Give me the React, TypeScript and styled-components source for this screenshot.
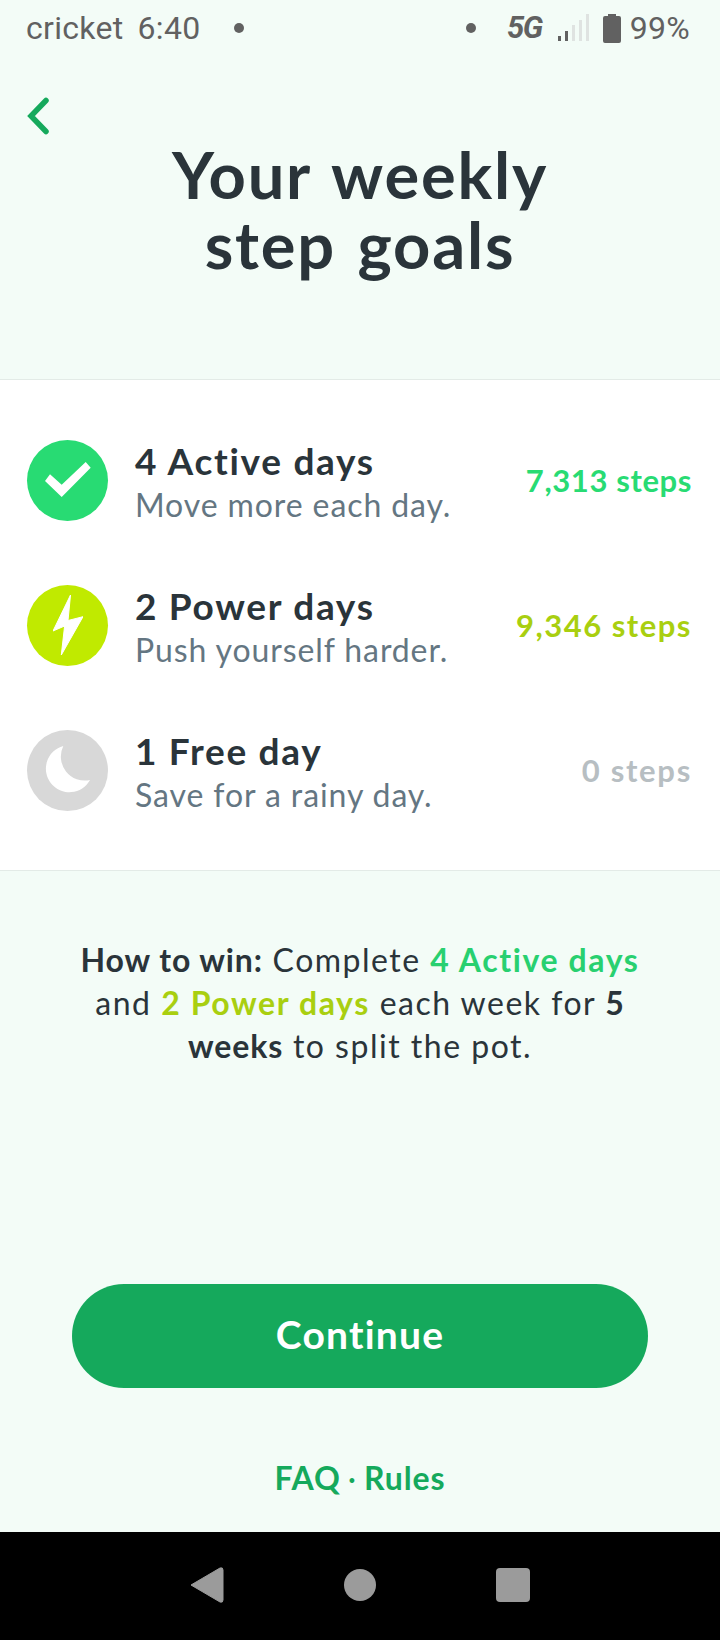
import React from "react";
import styled, { createGlobalStyle } from "styled-components";

const Global = createGlobalStyle`
  html, body { margin: 0; padding: 0; background: #f3fcf7; }
  * { box-sizing: border-box; }
`;

const Screen = styled.div`
  width: 720px;
  height: 1640px;
  display: flex;
  flex-direction: column;
  background: #f3fcf7;
  font-family: "Lato", "Liberation Sans", sans-serif;
  color: #2a343a;
  overflow: hidden;
`;

const StatusBar = styled.div`
  height: 56px;
  padding: 0 30px 1px 26px;
  display: flex;
  align-items: center;
  justify-content: space-between;
  font-family: "Roboto", sans-serif;
  font-size: 32px;
  color: #616161;
`;

const StatusGroup = styled.div`
  display: flex;
  align-items: center;
`;

const StatusText = styled.span<{ $ml?: number }>`
  margin-left: ${(p) => p.$ml ?? 0}px;
  line-height: 40px;
  letter-spacing: 0.3px;
`;

const Dot = styled.span<{ $ml?: number; $mr?: number }>`
  width: 10px;
  height: 10px;
  border-radius: 50%;
  background: #616161;
  margin-left: ${(p) => p.$ml ?? 0}px;
  margin-right: ${(p) => p.$mr ?? 0}px;
`;

const FiveG = styled.span`
  font-size: 31px;
  font-weight: 700;
  font-style: italic;
  letter-spacing: -1.5px;
  line-height: 40px;
`;

const Header = styled.header`
  height: 324px;
  flex: none;
  position: relative;
  border-bottom: 1px solid #e3ebe7;
`;

const BackButton = styled.div`
  position: absolute;
  left: 27px;
  top: 41px;
  width: 26px;
  height: 42px;
  display: flex;
`;

const Title = styled.h1`
  margin: 0;
  padding-top: 83px;
  text-align: center;
  font-size: 65px;
  line-height: 70px;
  font-weight: 700;
  letter-spacing: 1.8px;
  word-spacing: 4px;
  color: #2a343a;
`;

const Goals = styled.section`
  height: 491px;
  flex: none;
  background: #fff;
  border-bottom: 1px solid #e3ebe7;
  padding: 60px 28px 0 27px;
  display: flex;
  flex-direction: column;
  gap: 65px;
`;

const Goal = styled.div`
  display: flex;
  align-items: center;
  height: 80px;
`;

const Badge = styled.div<{ $bg: string }>`
  width: 81px;
  height: 81px;
  border-radius: 50%;
  flex: none;
  background: ${(p) => p.$bg};
  display: flex;
  align-items: center;
  justify-content: center;
`;

const GoalText = styled.div`
  margin-left: 27px;
  padding-top: 5px;
  flex: 1;
`;

const GoalTitle = styled.div`
  font-size: 37px;
  line-height: 44px;
  font-weight: 700;
  letter-spacing: 1.7px;
`;

const GoalSub = styled.div`
  font-size: 32px;
  line-height: 44px;
  color: #647682;
  letter-spacing: 0.9px;
`;

const Steps = styled.div<{ $color: string; $ls: number }>`
  font-size: 31px;
  font-weight: 700;
  color: ${(p) => p.$color};
  letter-spacing: ${(p) => p.$ls}px;
`;

const Main = styled.main`
  flex: 1;
  display: flex;
  flex-direction: column;
  align-items: center;
`;

const HowTo = styled.p`
  margin: 67px 0 0;
  width: 600px;
  text-align: center;
  font-size: 32px;
  line-height: 43px;
  letter-spacing: 1.5px;
`;

const Strong = styled.strong<{ $color?: string }>`
  font-weight: 700;
  letter-spacing: ${(p) => (p.$color ? 1.6 : 0.9)}px;
  color: ${(p) => p.$color ?? "inherit"};
`;

const Continue = styled.button`
  margin-top: 217px;
  width: 576px;
  height: 104px;
  padding: 0 0 4px;
  border: 0;
  border-radius: 52px;
  background: #15a95c;
  color: #fff;
  font-family: inherit;
  font-size: 39px;
  font-weight: 700;
  letter-spacing: 1.2px;
`;

const Links = styled.div`
  margin-top: 70px;
  font-size: 32px;
  line-height: 40px;
  font-weight: 700;
  letter-spacing: 0.9px;
  color: #15a95c;
`;

const Sep = styled.span`
  font-weight: 400;
  margin: 0 7px;
`;

const NavBar = styled.nav`
  height: 108px;
  flex: none;
  background: #000;
  display: flex;
  align-items: center;
  justify-content: center;
  padding-bottom: 2px;
`;

const NavItems = styled.div`
  display: flex;
  align-items: center;
  gap: 120px;
`;

const Circle = styled.div`
  width: 32px;
  height: 32px;
  border-radius: 50%;
  background: #9b9b9b;
`;

const Square = styled.div`
  width: 34px;
  height: 34px;
  border-radius: 4px;
  background: #9b9b9b;
`;

export default function App() {
  return (
    <Screen>
      <Global />
      <StatusBar>
        <StatusGroup>
          <StatusText>cricket</StatusText>
          <StatusText $ml={14}>6:40</StatusText>
          <Dot $ml={34} />
        </StatusGroup>
        <StatusGroup>
          <Dot $mr={31} />
          <FiveG>5G</FiveG>
          <svg width="32" height="30" viewBox="0 0 32 30" style={{ marginLeft: 16 }}>
            <rect x="0" y="23" width="3" height="5" fill="#616161" />
            <rect x="7" y="18" width="3" height="10" fill="#616161" />
            <rect x="14" y="12" width="3" height="16" fill="#dfe3e1" />
            <rect x="21" y="7" width="3" height="21" fill="#dfe3e1" />
            <rect x="28" y="1" width="3" height="27" fill="#dfe3e1" />
          </svg>
          <svg width="18" height="30" viewBox="0 0 18 30" style={{ marginLeft: 13 }}>
            <path d="M5 1h8v2h3a2 2 0 0 1 2 2v23a2 2 0 0 1-2 2H2a2 2 0 0 1-2-2V5a2 2 0 0 1 2-2h3z" fill="#616161" />
          </svg>
          <StatusText $ml={9}>99%</StatusText>
        </StatusGroup>
      </StatusBar>
      <Header>
        <BackButton>
          <svg width="26" height="42" viewBox="0 0 26 42" fill="none">
            <path d="M19 3.5 4 19l15 15.5" stroke="#15a95c" strokeWidth="5.5" strokeLinecap="round" strokeLinejoin="miter" />
          </svg>
        </BackButton>
        <Title>
          Your weekly
          <br />
          step goals
        </Title>
      </Header>
      <Goals>
        <Goal>
          <Badge $bg="#28db73">
            <svg width="46" height="36" viewBox="0 0 46 36">
              <path d="M0 19 16.7 35 45.7 5.7 40.7 0 16.7 22.7 5 12.3z" fill="#fff" />
            </svg>
          </Badge>
          <GoalText>
            <GoalTitle>4 Active days</GoalTitle>
            <GoalSub>Move more each day.</GoalSub>
          </GoalText>
          <Steps $color="#28db73" $ls={0.6}>7,313 steps</Steps>
        </Goal>
        <Goal>
          <Badge $bg="#c0ea00">
            <svg width="30" height="60" viewBox="0 0 30 60">
              <path d="M17.5 0 0 36 11.6 31 8.3 60 30 21.7 15 25.5z" fill="#fff" stroke="#fff" strokeLinejoin="round" />
            </svg>
          </Badge>
          <GoalText>
            <GoalTitle>2 Power days</GoalTitle>
            <GoalSub>Push yourself harder.</GoalSub>
          </GoalText>
          <Steps $color="#a9cf10" $ls={1.5}>9,346 steps</Steps>
        </Goal>
        <Goal>
          <Badge $bg="#d8d8d8">
            <svg width="46" height="48" viewBox="0 0 46 48">
              <path d="M18.3 0A23.5 23.5 0 1 0 45 34 A24 24 0 0 1 18.3 0z" fill="#fff" />
            </svg>
          </Badge>
          <GoalText>
            <GoalTitle>1 Free day</GoalTitle>
            <GoalSub>Save for a rainy day.</GoalSub>
          </GoalText>
          <Steps $color="#b7bec2" $ls={1.7}>0 steps</Steps>
        </Goal>
      </Goals>
      <Main>
        <HowTo>
          <Strong>How to win:</Strong> Complete <Strong $color="#28d070">4 Active days</Strong> and{" "}
          <Strong $color="#a9cf10">2 Power days</Strong> each week for <Strong>5 weeks</Strong> to split the pot.
        </HowTo>
        <Continue>Continue</Continue>
        <Links>
          FAQ<Sep>·</Sep>Rules
        </Links>
      </Main>
      <NavBar>
        <NavItems>
          <svg width="34" height="38" viewBox="0 0 34 38">
            <path d="M1 19 30 2q3-1 3 2v30q0 3-3 2z" fill="#9b9b9b" stroke="#9b9b9b" strokeLinejoin="round" />
          </svg>
          <Circle />
          <Square />
        </NavItems>
      </NavBar>
    </Screen>
  );
}
